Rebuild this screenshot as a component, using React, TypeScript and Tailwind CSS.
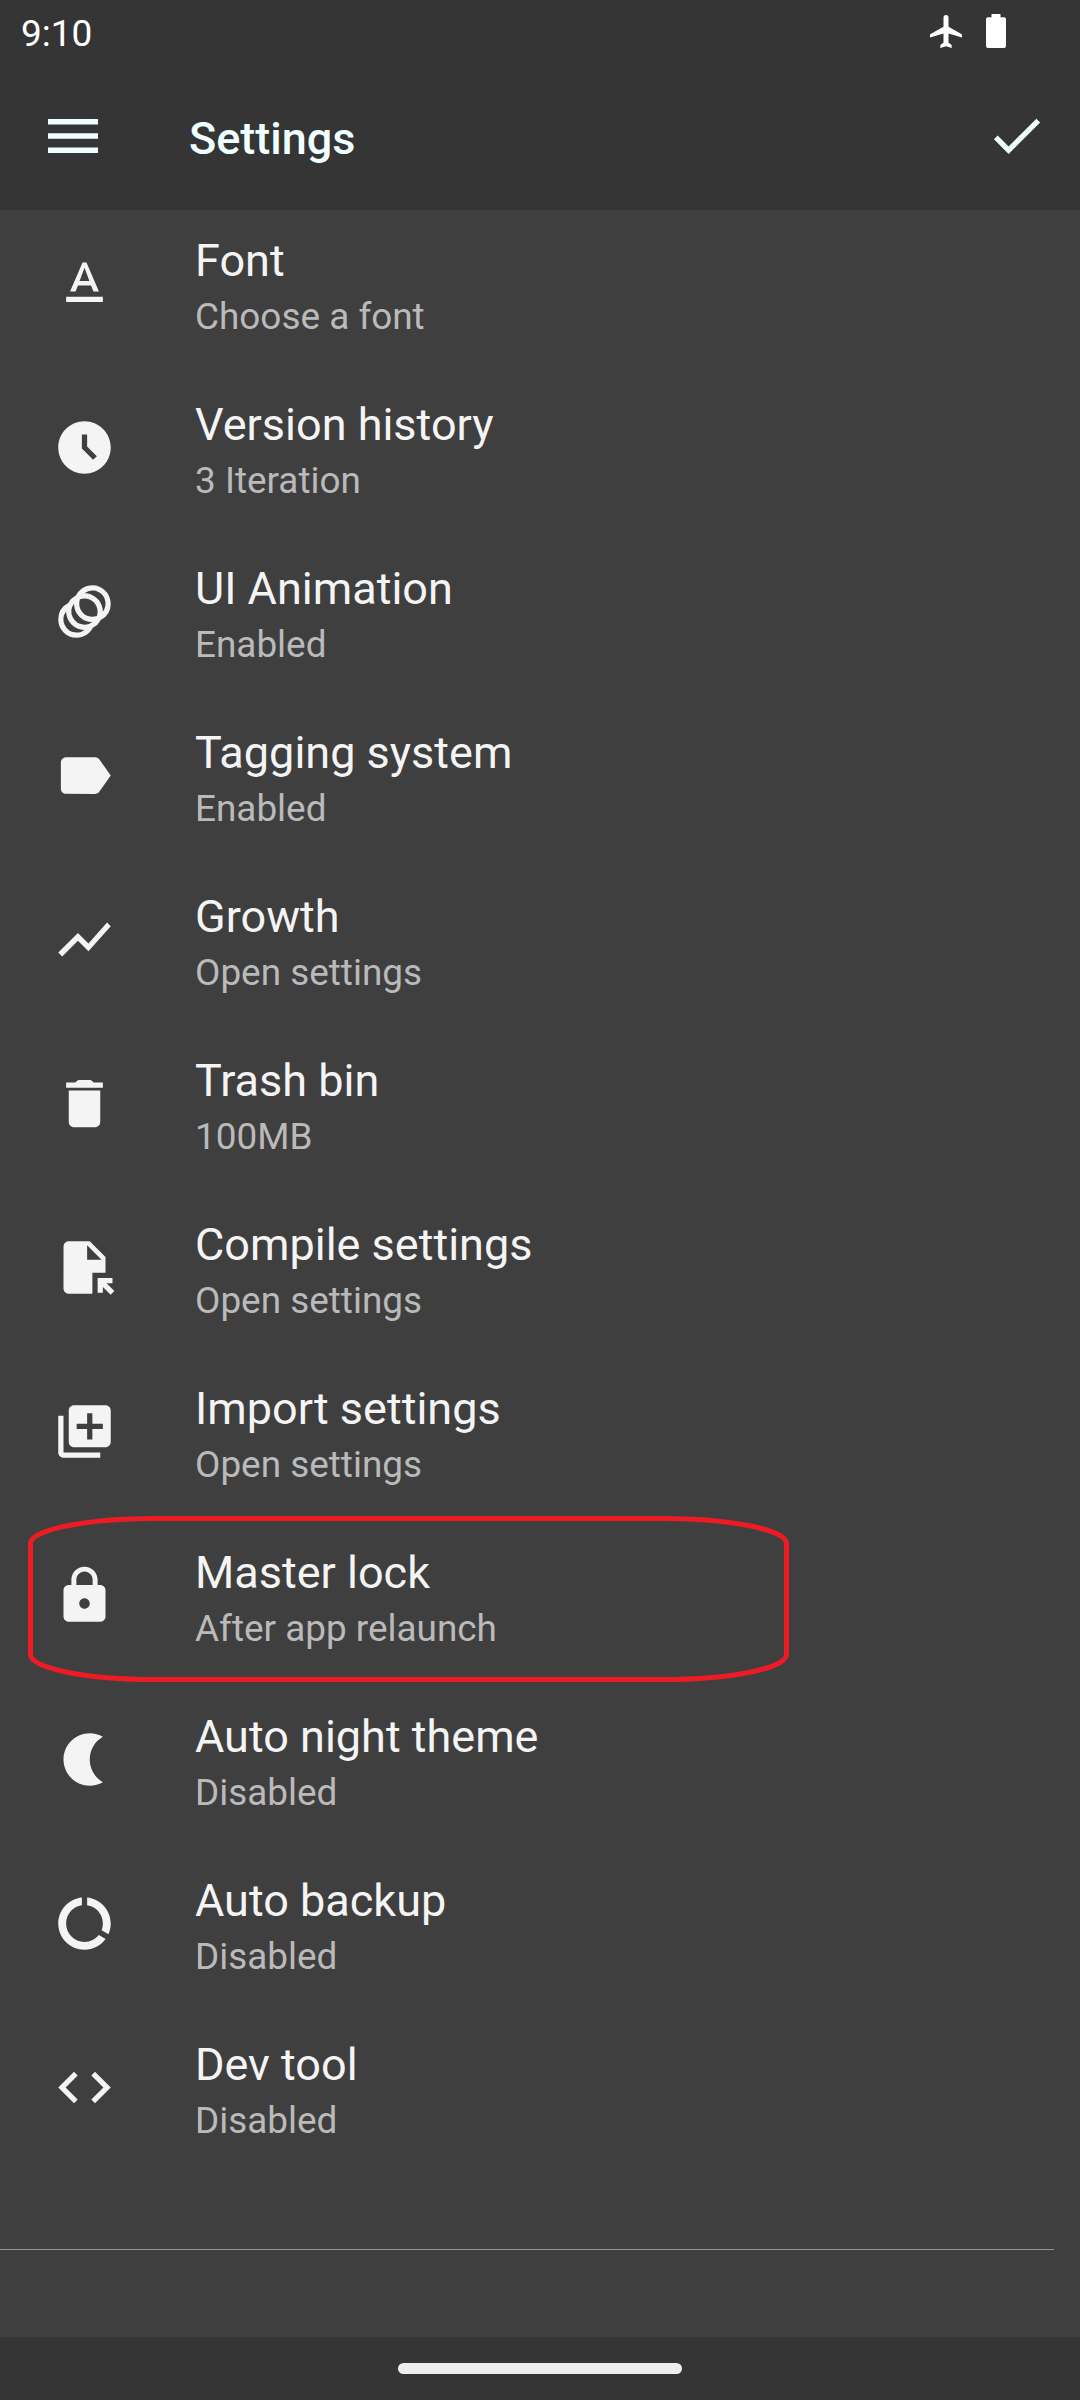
const icons = {
  font: "M5 17v2h14v-2H5zm4.5-4.2h5l.9 2.2h2.1L12.75 4h-1.5L6.5 15h2.1l.9-2.2zM12 5.98L13.87 11h-3.74L12 5.98z",
  clock: "M11.99 2C6.47 2 2 6.48 2 12s4.47 10 9.99 10C17.52 22 22 17.52 22 12S17.52 2 11.99 2zm3.3 14.71L11 12.41V7h2v4.59l3.71 3.71-1.42 1.41z",
  animation: "M15 2c-2.71 0-5.05 1.54-6.22 3.78a7.06 7.06 0 0 0-3 3A7 7 0 0 0 2 15c0 3.87 3.13 7 7 7 2.71 0 5.05-1.54 6.22-3.78a7.06 7.06 0 0 0 3-3A7 7 0 0 0 22 9c0-3.87-3.13-7-7-7zM9 20a5 5 0 0 1-4-8c0 3.87 3.13 7 7 7-.84.63-1.88 1-3 1zm3-3a5 5 0 0 1-4-8c0 3.87 3.13 7 7 7-.84.63-1.88 1-3 1zm4.7-3.3c-.53.19-1.1.3-1.7.3-2.76 0-5-2.24-5-5 0-.6.11-1.17.3-1.7.53-.19 1.1-.3 1.7-.3 2.76 0 5 2.24 5 5 0 .6-.11 1.17-.3 1.7zM19 12c0-3.87-3.13-7-7-7a5 5 0 0 1 7 7z",
  label: "M17.63 5.84C17.27 5.33 16.67 5 16 5L5 5.01C3.9 5.01 3 5.9 3 7v10c0 1.1.9 1.99 2 1.99L16 19c.67 0 1.27-.33 1.63-.84L22 12l-4.37-6.16z",
  chart: "M3.5 18.49l6-6.01 4 4L22 6.92l-1.41-1.41-7.09 7.97-4-4L2 16.99z",
  trash: "M6 19c0 1.1.9 2 2 2h8c1.1 0 2-.9 2-2V7H6v12zM19 4h-3.5l-.71-.71c-.18-.18-.44-.29-.7-.29H9.91c-.26 0-.52.11-.7.29L8.5 4H5v2h14V4z",
  compile: "M14 2H6c-1.1 0-1.99.9-1.99 2L4 20c0 1.1.89 2 1.99 2H15v-8h5V8l-6-6zm-1 7V3.5L18.5 9H13zm4 12.66V16h5.66v2h-2.24l2.95 2.95-1.41 1.41L19 19.41v2.24h-2z",
  library: "M4 6H2v14c0 1.1.9 2 2 2h14v-2H4V6zm16-4H8c-1.1 0-2 .9-2 2v12c0 1.1.9 2 2 2h12c1.1 0 2-.9 2-2V4c0-1.1-.9-2-2-2zm-1 9h-4v4h-2v-4H9V9h4V5h2v4h4v2z",
  lock: "M18 8h-1V6c0-2.76-2.24-5-5-5S7 3.24 7 6v2H6c-1.1 0-2 .9-2 2v10c0 1.1.9 2 2 2h12c1.1 0 2-.9 2-2V10c0-1.1-.9-2-2-2zm-6 9c-1.1 0-2-.9-2-2s.9-2 2-2 2 .9 2 2-.9 2-2 2zm3.1-9H8.9V6c0-1.71 1.39-3.1 3.1-3.1 1.71 0 3.1 1.39 3.1 3.1v2z",
  moon: "M14 2c1.82 0 3.53.5 5 1.35-2.99 1.73-5 4.95-5 8.65s2.01 6.92 5 8.65C17.53 21.5 15.82 22 14 22 8.48 22 4 17.52 4 12S8.48 2 14 2z",
  usage: "M13 2.05v3.03c3.39.49 6 3.39 6 6.92 0 .9-.18 1.75-.48 2.54l2.6 1.53c.56-1.24.88-2.62.88-4.07 0-5.18-3.95-9.45-9-9.95zM12 19c-3.87 0-7-3.13-7-7 0-3.53 2.61-6.43 6-6.92V2.05c-5.06.5-9 4.76-9 9.95 0 5.52 4.47 10 9.99 10 3.31 0 6.24-1.61 8.06-4.09l-2.6-1.53C16.17 17.98 14.21 19 12 19z",
  code: "M9.4 16.6L4.8 12l4.6-4.6L8 6l-6 6 6 6 1.4-1.4zm5.2 0l4.6-4.6-4.6-4.6L16 6l6 6-6 6-1.4-1.4z",
};

type IconName = keyof typeof icons;

function RowIcon({ name }: { name: IconName }) {
  return (
    <svg viewBox="0 0 24 24" className="mt-[42px] size-[63px] shrink-0 fill-current">
      <path d={icons[name]} fillRule="evenodd" />
    </svg>
  );
}

const rows: { icon: IconName; title: string; detail: string; marked?: boolean }[] = [
  { icon: "font", title: "Font", detail: "Choose a font" },
  { icon: "clock", title: "Version history", detail: "3 Iteration" },
  { icon: "animation", title: "UI Animation", detail: "Enabled" },
  { icon: "label", title: "Tagging system", detail: "Enabled" },
  { icon: "chart", title: "Growth", detail: "Open settings" },
  { icon: "trash", title: "Trash bin", detail: "100MB" },
  { icon: "compile", title: "Compile settings", detail: "Open settings" },
  { icon: "library", title: "Import settings", detail: "Open settings" },
  { icon: "lock", title: "Master lock", detail: "After app relaunch", marked: true },
  { icon: "moon", title: "Auto night theme", detail: "Disabled" },
  { icon: "usage", title: "Auto backup", detail: "Disabled" },
  { icon: "code", title: "Dev tool", detail: "Disabled" },
];

export default function App() {
  return (
    <div className="flex h-[2400px] w-[1080px] flex-col overflow-hidden bg-[#3f3f3f] font-['Roboto',sans-serif]">
      <header className="h-[210px] shrink-0 bg-[#353535]">
        <div className="flex h-[64px] items-start justify-between pl-[21px] pr-[74px] text-white">
          <span className="mt-[12px] text-[37px] leading-[44px]">9:10</span>
          <div className="mt-[14px] flex items-start gap-[24px]">
            <svg viewBox="0 0 32 34" className="h-[34px] w-[32px] fill-current">
              <path d="M32 23.5v-2.3q0-.7-.6-1.1L18.5 12.8V3.5a2.5 2.5 0 0 0-5 0V12.8L.6 20.1q-.6.4-.6 1.1v2.3l13.5-4v9.3l-2.6 1.8q-.6.5-.6 1.1v2.2L16 32.300l5.700 1.600v-2.200q0-.6-.6-1.100l-2.600-1.800v-9.300z" />
            </svg>
            <svg viewBox="0 0 20 34" className="h-[34px] w-[20px] fill-current">
              <path d="M5.5 0h9v3.3H18a2 2 0 0 1 2 2V32a2 2 0 0 1-2 2H2a2 2 0 0 1-2-2V5.3a2 2 0 0 1 2-2h3.5z" />
            </svg>
          </div>
        </div>
        <div className="flex items-start pl-[48px] text-[#f0ffff]">
          <svg viewBox="0 0 50 34" className="mt-[55px] h-[34px] w-[50px] fill-current">
            <path d="M0 0h50v5.500H0zM0 14.250h50v5.500H0zM0 28.500h50v5.500H0z" />
          </svg>
          <h1 className="ml-[91px] mt-[49px] text-[45px] font-medium leading-[52px]">Settings</h1>
          <svg viewBox="0 0 24 24" className="ml-auto mr-[32px] mt-[40px] size-[63px] fill-current">
            <path d="M9 16.17L4.83 12l-1.42 1.41L9 19 21 7l-1.41-1.41z" />
          </svg>
        </div>
      </header>
      <main className="h-[2127px] shrink-0">
        {rows.map((row) => (
          <div key={row.title} className="relative flex h-[164px] items-start pl-[53px] text-[#f4f4f4]">
            <RowIcon name={row.icon} />
            <div className="ml-[79px] mt-[25px]">
              <div className="text-[45px] leading-[52px]">{row.title}</div>
              <div className="mt-[8px] text-[36.9px] leading-[44px] text-[#bababa]">{row.detail}</div>
            </div>
            {row.marked && (
              <svg viewBox="0 0 761 166" className="absolute left-[28px] top-[-6px] h-[166px] w-[761px]">
                <rect
                  x="2.5"
                  y="2.5"
                  width="756"
                  height="161"
                  rx="125"
                  ry="25"
                  fill="none"
                  stroke="#ed1c24"
                  strokeWidth="5"
                />
              </svg>
            )}
          </div>
        ))}
        <div className="mt-[71px] h-px w-[1054px] bg-[#959595]" />
      </main>
      <footer className="flex flex-1 items-start justify-center bg-[#353535]">
        <div className="mt-[26px] h-[11px] w-[284px] rounded-full bg-[#eeeeee]" />
      </footer>
    </div>
  );
}
